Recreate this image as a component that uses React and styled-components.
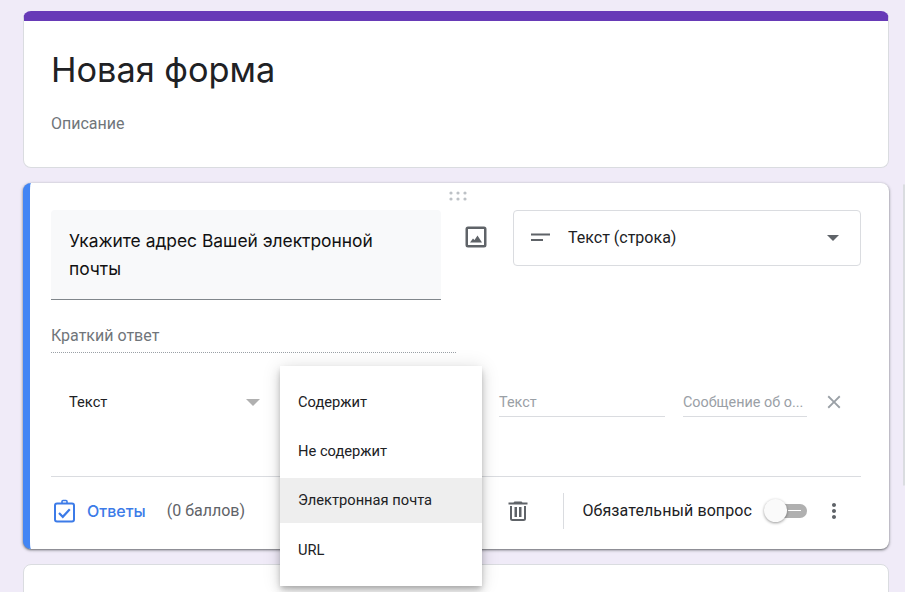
import React from 'react';
import styled, { createGlobalStyle } from 'styled-components';
import { MdClose, MdMoreVert } from 'react-icons/md';

const GlobalStyle = createGlobalStyle`
  html, body {
    margin: 0;
    height: 592px;
    overflow: hidden;
    background: #f0ebf8;
    font-family: Roboto, "Noto Sans", sans-serif;
  }
`;

const Page = styled.div`
  position: relative;
  width: 905px;
  height: 592px;
  overflow: hidden;
  box-sizing: border-box;
  padding: 11px 0 0 23px;
  display: grid;
  grid-template-columns: 866px 1fr;
  column-gap: 14px;
  align-items: start;
`;

const Cards = styled.div`
  display: flex;
  flex-direction: column;
  gap: 15px;
`;

const SideBar = styled.div`
  margin-top: 173px;
  height: 300px;
  background: #fff;
  border: 1px solid #dadce0;
  border-radius: 8px;
`;

const HeaderCard = styled.section`
  height: 157px;
  box-sizing: border-box;
  background: #fff;
  border: 1px solid #dadce0;
  border-top: 10px solid #673ab7;
  border-radius: 8px;
  padding: 29px 27px 0;
`;

const Title = styled.h1`
  margin: 0;
  font-family: Inter, sans-serif;
  font-weight: 400;
  font-size: 34.3px;
  line-height: 40px;
  color: #202124;
`;

const Description = styled.div`
  margin-top: 24px;
  font-size: 16px;
  line-height: 20px;
  color: #70757a;
`;

const QuestionCard = styled.section`
  position: relative;
  height: 366px;
  box-sizing: border-box;
  background: #fff;
  border-radius: 8px;
  border-left: 7px solid #4285f4;
  box-shadow: 0 1px 2px rgba(60, 64, 67, 0.6), 0 1px 3px 1px rgba(60, 64, 67, 0.2);
  padding: 27px 28px 0 21px;
  display: flex;
  flex-direction: column;
`;

const DragHandle = styled.svg`
  position: absolute;
  left: 419px;
  top: 8px;
`;

const TopRow = styled.div`
  display: flex;
  align-items: flex-start;
`;

const QuestionField = styled.div`
  width: 390px;
  height: 90px;
  box-sizing: border-box;
  background: #f8f9fa;
  border-bottom: 1px solid #80868b;
  border-radius: 4px 4px 0 0;
  padding: 17px 18px 0;
  font-family: Inter, sans-serif;
  font-size: 17.4px;
  line-height: 27.5px;
  color: #111;
`;

const ImageButton = styled.div`
  width: 24px;
  height: 24px;
  margin: 15px 25px 0 23px;
`;

const TypeSelect = styled.div`
  width: 348px;
  height: 56px;
  box-sizing: border-box;
  border: 1px solid #dadce0;
  border-radius: 4px;
  padding: 0 21px 0 15px;
  display: flex;
  align-items: center;
  font-size: 16px;
  color: #202124;
`;

const TypeLabel = styled.span`
  margin-left: 15px;
  flex: 1;
  position: relative;
  top: -1px;
`;

const Arrow = styled.span`
  width: 0;
  height: 0;
  border-left: ${(p) => p.$size}px solid transparent;
  border-right: ${(p) => p.$size}px solid transparent;
  border-top: ${(p) => p.$size}px solid ${(p) => p.$color};
`;

const ShortAnswer = styled.div`
  width: 405px;
  height: 31px;
  margin-top: 22px;
  box-sizing: border-box;
  border-bottom: 1px dotted #9aa0a6;
  font-size: 16px;
  line-height: 28px;
  color: #70757a;
`;

const ValidationRow = styled.div`
  height: 48px;
  margin-top: 25px;
  display: flex;
  align-items: center;
`;

const RuleSelect = styled.div`
  width: 209px;
  box-sizing: border-box;
  padding-left: 18px;
  display: flex;
  align-items: center;
  justify-content: space-between;
  font-size: 14.7px;
  color: #202124;
`;

const TextInput = styled.div`
  width: ${(p) => p.$width}px;
  margin-left: ${(p) => p.$offset}px;
  height: 30px;
  box-sizing: border-box;
  border-bottom: 1px solid #dadce0;
  font-size: 14.4px;
  line-height: 32px;
  color: #9aa0a6;
  white-space: nowrap;
`;

const CloseButton = styled.div`
  margin-left: 16px;
  display: flex;
  color: #9aa0a6;
`;

const Divider = styled.div`
  height: 1px;
  margin-top: 50px;
  background: #dadce0;
`;

const Footer = styled.div`
  height: 67px;
  display: flex;
  align-items: center;
`;

const AnswersLink = styled.span`
  margin-left: 10px;
  font-family: Inter, sans-serif;
  font-weight: 500;
  font-size: 16px;
  color: #3c7be8;
`;

const Points = styled.span`
  margin-left: 21px;
  font-size: 16px;
  color: #5f6368;
`;

const FooterActions = styled.div`
  margin-left: auto;
  margin-right: 16px;
  display: flex;
  align-items: center;
`;

const VDivider = styled.div`
  width: 1px;
  height: 36px;
  margin: 0 18px 0 33px;
  background: #dadce0;
`;

const Required = styled.span`
  font-size: 16px;
  letter-spacing: 0.1px;
  color: #202124;
`;

const Toggle = styled.div`
  position: relative;
  width: 36px;
  height: 14px;
  margin-left: 19px;
  border-radius: 7px;
  background: #b0b0b0;
`;

const ToggleMark = styled.span`
  position: absolute;
  right: 6px;
  top: 6px;
  width: 13px;
  height: 1px;
  background: #fff;
`;

const Knob = styled.span`
  position: absolute;
  left: -7px;
  top: -5px;
  width: 23px;
  height: 23px;
  border-radius: 50%;
  background: #fafafa;
  box-shadow: 0 1px 3px rgba(0, 0, 0, 0.4);
`;

const MoreButton = styled.div`
  margin-left: 15px;
  margin-right: -1px;
  display: flex;
  color: #5f6368;
`;

const BottomCard = styled.section`
  height: 60px;
  background: #fff;
  border: 1px solid #dadce0;
  border-radius: 8px;
`;

const Menu = styled.ul`
  position: absolute;
  left: 280px;
  top: 366px;
  width: 202px;
  height: 220px;
  box-sizing: border-box;
  margin: 0;
  padding: 13px 0;
  list-style: none;
  background: #fff;
  box-shadow: 0 3px 5px -1px rgba(0, 0, 0, 0.2), 0 6px 10px rgba(0, 0, 0, 0.14), 0 1px 18px rgba(0, 0, 0, 0.12);
  display: flex;
  flex-direction: column;
  gap: 4.4px;
`;

const MenuItem = styled.li`
  height: 45px;
  padding-left: 18px;
  display: flex;
  align-items: center;
  font-size: 14.7px;
  color: #202124;
  background: ${(p) => (p.$active ? '#eeeeee' : 'transparent')};
`;

const ImageIcon = () => (
  <svg width="24" height="24" viewBox="0 0 24 24" fill="#5f6368">
    <path fillRule="evenodd" d="M4 1.500h16A2.500 2.500 0 0 1 22.500 4v16a2.500 2.500 0 0 1-2.500 2.500H4A2.500 2.500 0 0 1 1.500 20V4A2.500 2.500 0 0 1 4 1.500zM4 4v16h16V4z" />
    <path d="M6 17.500l3-4 1.500 1.500 3-4.500 4.500 7z" />
  </svg>
);

const ShortTextIcon = () => (
  <svg width="24" height="24" viewBox="0 0 24 24" fill="#5f6368">
    <rect x="2" y="7.500" width="19" height="2" />
    <rect x="2" y="13" width="12" height="2" />
  </svg>
);

const AnswerKeyIcon = () => (
  <svg width="26" height="26" viewBox="0 0 26 26" fill="none" stroke="#3c7be8" strokeWidth="2">
    <rect x="4" y="5.500" width="19" height="18" rx="2" />
    <path d="M11 5.500V3.500a1 1 0 0 1 1-1h3a1 1 0 0 1 1 1v2" strokeWidth="1.600" />
    <path d="M8 15l3.800 3.800 7-7.500" strokeWidth="2.200" />
  </svg>
);

const TrashIcon = () => (
  <svg width="24" height="24" viewBox="0 0 24 24" fill="#5f6368">
    <path d="M15.500 2.500h-7l-1 1H2.500v2h19v-2h-5z" />
    <path d="M4 7v12.500A2.500 2.500 0 0 0 6.500 22h11a2.500 2.500 0 0 0 2.500-2.500V7H18v12.500a.5.5 0 0 1-.5.500h-11a.5.5 0 0 1-.5-.5V7z" />
    <rect x="8.500" y="8" width="2.500" height="10" />
    <rect x="13" y="8" width="2.500" height="10" />
  </svg>
);

export default function App() {
  return (
    <>
      <GlobalStyle />
      <Page>
        <Cards>
          <HeaderCard>
            <Title>Новая форма</Title>
            <Description>Описание</Description>
          </HeaderCard>
          <QuestionCard>
            <DragHandle width="18" height="12" viewBox="0 0 18 12" fill="#bdc1c6">
              {[2, 9, 16].map((x) =>
                [2, 8].map((y) => <circle key={`${x}-${y}`} cx={x} cy={y} r="1.600" />)
              )}
            </DragHandle>
            <TopRow>
              <QuestionField>Укажите адрес Вашей электронной почты</QuestionField>
              <ImageButton>
                <ImageIcon />
              </ImageButton>
              <TypeSelect>
                <ShortTextIcon />
                <TypeLabel>Текст (строка)</TypeLabel>
                <Arrow $size={6} $color="#5f6368" />
              </TypeSelect>
            </TopRow>
            <ShortAnswer>Краткий ответ</ShortAnswer>
            <ValidationRow>
              <RuleSelect>
                Текст
                <Arrow $size={7} $color="#b0b0b0" />
              </RuleSelect>
              <TextInput $width={166} $offset={239}>Текст</TextInput>
              <TextInput $width={124} $offset={18}>Сообщение об о...</TextInput>
              <CloseButton>
                <MdClose size={22} />
              </CloseButton>
            </ValidationRow>
            <Divider />
            <Footer>
              <AnswerKeyIcon />
              <AnswersLink>Ответы</AnswersLink>
              <Points>(0 баллов)</Points>
              <FooterActions>
                <TrashIcon />
                <VDivider />
                <Required>Обязательный вопрос</Required>
                <Toggle>
                  <ToggleMark />
                  <Knob />
                </Toggle>
                <MoreButton>
                  <MdMoreVert size={24} />
                </MoreButton>
              </FooterActions>
            </Footer>
          </QuestionCard>
          <BottomCard />
        </Cards>
        <SideBar />
        <Menu>
          <MenuItem>Содержит</MenuItem>
          <MenuItem>Не содержит</MenuItem>
          <MenuItem $active>Электронная почта</MenuItem>
          <MenuItem>URL</MenuItem>
        </Menu>
      </Page>
    </>
  );
}
